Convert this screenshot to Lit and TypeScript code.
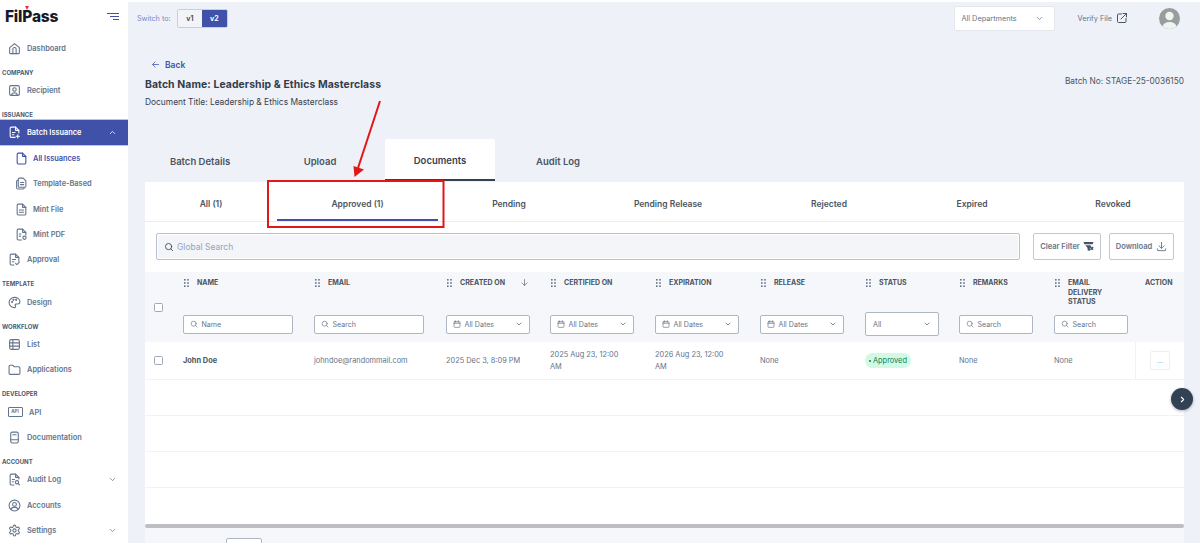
import { LitElement, css, html, svg } from 'lit';
import { customElement } from 'lit/decorators.js';

const doc = 'M14 2H6a2 2 0 0 0-2 2v16a2 2 0 0 0 2 2h12a2 2 0 0 0 2-2V8z';
const fold = 'M14 2v6h6';

const icons: Record<string, unknown> = {
  home: svg`<path d="M3 10.5 12 3l9 7.5V20a1.5 1.5 0 0 1-1.5 1.5h-15A1.5 1.5 0 0 1 3 20z"/><path d="M9 21.5V13a3 3 0 0 1 6 0v8.5"/>`,
  recipient: svg`<rect x="3" y="3" width="18" height="18" rx="2.5"/><circle cx="12" cy="10" r="3.2"/><path d="M6.5 21c.5-3.500 2.800-5 5.500-5s5 1.500 5.500 5"/>`,
  batch: svg`<path d="M13 21H6a2 2 0 0 1-2-2V4a2 2 0 0 1 2-2h8l6 6v5"/><path d="M14 2v6h6M8 12h5M8 16h3M18 16v6M15 19h6"/>`,
  file: svg`<path d="${doc}"/><path d="${fold}"/>`,
  template: svg`<path d="M8 2h7l5 5v10a2 2 0 0 1-2 2H8a2 2 0 0 1-2-2V4a2 2 0 0 1 2-2z"/><path d="M6 6H5a2 2 0 0 0-2 2v12a2 2 0 0 0 2 2h10a2 2 0 0 0 2-2M10 10h6M10 14h6"/>`,
  mint: svg`<path d="${doc}"/><path d="${fold}M8 13h8M8 17h8"/>`,
  pdf: svg`<path d="M12 22H6a2 2 0 0 1-2-2V4a2 2 0 0 1 2-2h8l6 6v5"/><path d="${fold}M8 11h3M8 15h2"/><circle cx="17.500" cy="18" r="3"/>`,
  approval: svg`<path d="M11 22H6a2 2 0 0 1-2-2V4a2 2 0 0 1 2-2h8l6 6v7"/><path d="${fold}M8 12h6M8 16h3M14 19l2.500 2.500L21 17"/>`,
  design: svg`<path d="M12 2.500C6.500 2.500 2 6.800 2 12s4.500 9.500 10 9.500c1.500 0 2.200-1 2.200-2 0-1.500-1-1.800-1-3 0-1.100.9-1.800 2-1.800h2.800c2.300 0 4-1.700 4-4C22 6 17.500 2.500 12 2.500z"/><circle cx="7.500" cy="11" r="1"/><circle cx="10" cy="7" r="1"/><circle cx="15" cy="7" r="1"/>`,
  list: svg`<rect x="3" y="3" width="18" height="18" rx="3"/><path d="M3 9h18M3 15h18M9 3v18"/>`,
  folder: svg`<path d="M2 6a2 2 0 0 1 2-2h5l2.500 3H20a2 2 0 0 1 2 2v10a2 2 0 0 1-2 2H4a2 2 0 0 1-2-2z"/>`,
  book: svg`<path d="M5 5a3 3 0 0 1 3-3h8a3 3 0 0 1 3 3v14a3 3 0 0 1-3 3H8a3 3 0 0 1-3-3z"/><path d="M5 16h14M9 7h6"/>`,
  audit: svg`<path d="M11 22H6a2 2 0 0 1-2-2V4a2 2 0 0 1 2-2h8l6 6v3"/><path d="${fold}M8 12h4M8 16h2"/><circle cx="16.500" cy="17" r="3"/><path d="m19 19.500 2.500 2.500"/>`,
  accounts: svg`<circle cx="12" cy="12" r="10"/><circle cx="12" cy="10" r="3.500"/><path d="M5.500 19.500c1-3 3.500-4.500 6.500-4.500s5.500 1.500 6.500 4.500"/>`,
  settings: svg`<path d="M12.220 2h-.44a2 2 0 0 0-2 2v.18a2 2 0 0 1-1 1.730l-.43.25a2 2 0 0 1-2 0l-.15-.08a2 2 0 0 0-2.730.73l-.22.38a2 2 0 0 0 .73 2.730l.15.1a2 2 0 0 1 1 1.720v.51a2 2 0 0 1-1 1.740l-.15.09a2 2 0 0 0-.73 2.730l.22.38a2 2 0 0 0 2.730.73l.15-.08a2 2 0 0 1 2 0l.43.25a2 2 0 0 1 1 1.730V20a2 2 0 0 0 2 2h.44a2 2 0 0 0 2-2v-.18a2 2 0 0 1 1-1.730l.43-.25a2 2 0 0 1 2 0l.15.08a2 2 0 0 0 2.730-.73l.22-.39a2 2 0 0 0-.73-2.730l-.15-.08a2 2 0 0 1-1-1.740v-.5a2 2 0 0 1 1-1.740l.15-.09a2 2 0 0 0 .73-2.730l-.22-.38a2 2 0 0 0-2.730-.73l-.15.08a2 2 0 0 1-2 0l-.43-.25a2 2 0 0 1-1-1.730V4a2 2 0 0 0-2-2z"/><circle cx="12" cy="12" r="3"/>`,
  down: svg`<path d="m6 9 6 6 6-6"/>`,
  up: svg`<path d="m6 15 6-6 6 6"/>`,
  right: svg`<path d="m9 6 6 6-6 6"/>`,
  back: svg`<path d="M20 12H5M11 5l-7 7 7 7"/>`,
  arrowDown: svg`<path d="M12 4v16M5 13l7 7 7-7"/>`,
  search: svg`<circle cx="11" cy="11" r="7.500"/><path d="m21 21-4.500-4.500"/>`,
  calendar: svg`<rect x="3" y="5" width="18" height="17" rx="2"/><path d="M3 10h18M8 2v5M16 2v5"/>`,
  external: svg`<path d="M11 4H5a2 2 0 0 0-2 2v13a2 2 0 0 0 2 2h13a2 2 0 0 0 2-2v-6"/><path d="M14 3h7v7M21 3 10 14"/>`,
  download: svg`<path d="M12 3v13M6.500 10.500 12 16l5.500-5.500M3 17v3a1 1 0 0 0 1 1h16a1 1 0 0 0 1-1v-3"/>`,
};

function ic(name: string, cls = '') {
  return html`<svg class="ic ${cls}" viewBox="0 0 24 24" fill="none" stroke="currentColor" stroke-width="2" stroke-linecap="round" stroke-linejoin="round">${icons[name]}</svg>`;
}

const grip = html`<svg class="grip" viewBox="0 0 5 8" fill="currentColor"><rect x="0" y="0" width="1.600" height="1.600"/><rect x="3.200" y="0" width="1.600" height="1.600"/><rect x="0" y="3.200" width="1.600" height="1.600"/><rect x="3.200" y="3.200" width="1.600" height="1.600"/><rect x="0" y="6.400" width="1.600" height="1.600"/><rect x="3.200" y="6.400" width="1.600" height="1.600"/></svg>`;

type NavItem = { label: string; icon?: string; sub?: boolean; active?: boolean; current?: boolean; caret?: string };
type NavGroup = { title?: string; items: NavItem[] };

const nav: NavGroup[] = [
  { items: [{ label: 'Dashboard', icon: 'home' }] },
  { title: 'COMPANY', items: [{ label: 'Recipient', icon: 'recipient' }] },
  {
    title: 'ISSUANCE',
    items: [
      { label: 'Batch Issuance', icon: 'batch', active: true, caret: 'up' },
      { label: 'All Issuances', icon: 'file', sub: true, current: true },
      { label: 'Template-Based', icon: 'template', sub: true },
      { label: 'Mint File', icon: 'mint', sub: true },
      { label: 'Mint PDF', icon: 'pdf', sub: true },
      { label: 'Approval', icon: 'approval' },
    ],
  },
  { title: 'TEMPLATE', items: [{ label: 'Design', icon: 'design' }] },
  { title: 'WORKFLOW', items: [{ label: 'List', icon: 'list' }, { label: 'Applications', icon: 'folder' }] },
  { title: 'DEVELOPER', items: [{ label: 'API', icon: 'api' }, { label: 'Documentation', icon: 'book' }] },
  {
    title: 'ACCOUNT',
    items: [
      { label: 'Audit Log', icon: 'audit', caret: 'down' },
      { label: 'Accounts', icon: 'accounts' },
      { label: 'Settings', icon: 'settings', caret: 'down' },
    ],
  },
];

const statusTabs = ['All (1)', 'Approved (1)', 'Pending', 'Pending Release', 'Rejected', 'Expired', 'Revoked'];

@customElement('app-root')
export class AppRoot extends LitElement {
  static styles = css`
    :host {
      display: block;
      position: relative;
      width: 1200px;
      height: 543px;
      overflow: hidden;
      background: #fff;
      font-family: Inter, 'Liberation Sans', sans-serif;
      font-size: 8.5px;
      color: #475569;
    }
    .ic { width: 12px; height: 12px; flex: none; display: block; }
    .grip { width: 5px; height: 8px; flex: none; color: #64748b; }
    .shell { display: flex; height: 100%; }

    /* sidebar */
    .side { width: 128px; flex: none; background: #fff; display: flex; flex-direction: column; }
    .brand { height: 35.500px; flex: none; display: flex; align-items: center; justify-content: space-between; padding: 0 9px 3px 5px; box-sizing: border-box; }
    .logo { position: relative; font-size: 15.5px; font-weight: 800; color: #16192c; letter-spacing: -0.2px; line-height: 1; }
    .logo i { position: absolute; left: 20px; top: -3px; width: 0; height: 0; border-left: 2.500px solid transparent; border-right: 2.500px solid transparent; border-top: 4px solid #e5343f; }
    .burger { width: 12px; display: flex; flex-direction: column; align-items: flex-end; gap: 1.500px; }
    .burger span { display: block; height: 1.500px; background: #3f51a8; }
    .burger span:nth-child(1) { width: 12px; }
    .burger span:nth-child(2) { width: 9px; }
    .burger span:nth-child(3) { width: 6px; }
    .group-title { height: 11px; flex: none; margin-top: 5.800px; padding-left: 2px; font-size: 6px; font-weight: 700; line-height: 11px; color: #4b5a70; }
    .item { height: 25.450px; flex: none; display: flex; align-items: center; padding-left: 7.500px; padding-right: 11px; gap: 6.500px; font-size: 7.400px; font-weight: 600; color: #64748b; }
    .item > .ic:first-child { width: 13px; height: 13px; }
    .item.sub { padding-left: 14.500px; gap: 5.500px; }
    .item.active { background: #3f51a8; color: #fff; box-shadow: 0 0 0 0.500px #7b88c6; }
    .item.current { color: #3f51a8; }
    .item .caret { margin-left: auto; width: 9px; height: 9px; }
    .api-ic { width: 13px; height: 8px; margin-right: 0; border: 0.800px solid currentColor; border-radius: 1px; font-size: 4.500px; line-height: 8px; text-align: center; font-weight: 700; flex: none; }

    /* main */
    .main { flex: 1; min-width: 0; margin-top: 2px; background: #eef1f7; display: flex; flex-direction: column; }
    .topbar { height: 32px; flex: none; display: flex; align-items: center; padding: 0 20px 0 9px; }
    .switch-label { color: #7a86c4; font-size: 7.200px; margin-right: 6px; }
    .switch { display: flex; height: 19px; width: 51px; border-radius: 2px; border: 1px solid #c9ced8; overflow: hidden; box-sizing: border-box; font-size: 7px; font-weight: 700; }
    .switch span { flex: 1; display: flex; align-items: center; justify-content: center; background: #f3f4f7; color: #475569; }
    .switch span.on { background: #3f51a8; color: #fff; }
    .dept { margin-left: auto; width: 101px; height: 25px; box-sizing: border-box; background: #fff; border: 1px solid #e3e6ec; border-radius: 2px; padding: 0 10px 0 7px; display: flex; align-items: center; justify-content: space-between; font-size: 7.300px; color: #64748b; }
    .dept .ic { width: 9px; height: 9px; }
    .verify { margin-left: 23px; display: flex; align-items: center; gap: 4px; font-size: 7.300px; color: #64748b; }
    .verify .ic { width: 12px; height: 12px; color: #475569; }
    .avatar { margin-left: 31px; width: 21px; height: 21px; border-radius: 50%; overflow: hidden; }
    .avatar svg { display: block; width: 100%; height: 100%; }

    .content { flex: 1; min-height: 0; padding: 24px 16px 0 17px; display: flex; flex-direction: column; }
    .head { display: flex; justify-content: space-between; align-items: flex-start; height: 50px; flex: none; }
    .back { display: flex; align-items: center; gap: 5px; padding: 1px 0 0 6px; height: 12px; box-sizing: border-box; color: #3f51a8; font-weight: 600; }
    .back .ic { width: 9px; height: 9px; }
    .name { margin-top: 7px; font-size: 10.400px; font-weight: 700; line-height: 16px; color: #333d4b; letter-spacing: 0.100px; }
    .title { margin-top: 3px; line-height: 12px; color: #374151; font-size: 8.400px; }
    .batch-no { padding-top: 17px; line-height: 12px; font-size: 8.300px; color: #4b5563; }

    .tabs { margin-top: 31px; display: flex; gap: 10px; height: 42px; flex: none; }
    .tab { width: 110px; box-sizing: border-box; padding-top: 2px; display: flex; align-items: center; justify-content: center; font-size: 9.500px; font-weight: 600; color: #4b5563; border-radius: 2px 2px 0 0; }
    .tab:last-child { width: 106px; }
    .tab.on { background: #fff; color: #374151; border-bottom: 2px solid #334155; }

    .card { margin-top: 1px; flex: 1; min-height: 0; background: #f5f7fa; display: flex; flex-direction: column; position: relative; }
    .status-tabs { display: grid; grid-template-columns: 132px 161px 142px 176px 146px 140px 142px; height: 40px; flex: none; background: #fff; border-bottom: 1px solid #e9ecf1; box-sizing: border-box; }
    .status-tab { display: flex; align-items: center; justify-content: center; padding-top: 5px; font-weight: 600; color: #4b5563; position: relative; }
    .status-tab.on::after { content: ''; position: absolute; left: 0; right: 0; bottom: 0; height: 2px; background: #3f51a8; }

    .tools { background: #fff; padding: 11px 10px 12px 11px; display: flex; gap: 8px; flex: none; }
    .global { flex: 1; height: 27px; box-sizing: border-box; margin-right: 5px; border: 1px solid #b9c0ca; border-radius: 2px; background: #f3f5f9; box-shadow: inset 0 0 0 1px #fff; display: flex; align-items: center; gap: 3px; padding-left: 7px; color: #94a3b8; font-size: 8.500px; }
    .global .ic { width: 10px; height: 10px; color: #374151; }
    .tool { height: 27px; box-sizing: border-box; border: 1px solid #c3c9d2; border-radius: 2px; background: #fff; display: flex; align-items: center; justify-content: center; gap: 3px; font-size: 7.500px; font-weight: 600; color: #64748b; }
    .tool.clear { width: 68px; }
    .tool.dl { width: 65px; gap: 4px; }
    .tool .ic { width: 11px; height: 11px; }

    .grid { display: grid; grid-template-columns: 38px 131px 132px 104px 105px 105px 105px 94px 95px 81px 49px; }
    .thead { height: 70px; background: #f5f7fa; flex: none; }
    .th { display: flex; flex-direction: column; padding: 6px 0 6px; box-sizing: border-box; min-width: 0; }
    .th-top { display: flex; gap: 8px; align-items: flex-start; padding-left: 1px; font-size: 7px; font-weight: 700; color: #4b5563; line-height: 9.600px; }
    .th-top span { max-width: 60px; }
    .th.narrow .th-top span { max-width: 36px; }
    .th-top .grip { margin-top: 1px; }
    .th-top .sort { width: 9px; height: 9px; margin-left: 7px; color: #64748b; flex: none; }
    .th-check { display: flex; align-items: center; padding: 0 0 0 9px; }
    .check { width: 9px; height: 9px; border: 1px solid #a0a8b4; border-radius: 1.500px; background: #fff; box-sizing: border-box; }
    .filter-wrap { margin-top: auto; height: 24px; display: flex; align-items: center; flex: none; }
    .filter { height: 19px; box-sizing: border-box; border: 1px solid #aeb6c2; border-radius: 2px; background: #fff; display: flex; align-items: center; gap: 3.500px; padding: 0 6px; font-size: 7.100px; color: #64748b; }
    .filter .ic { width: 8px; height: 8px; }
    .filter .ic:last-child:not(:first-child) { margin-left: auto; color: #475569; }
    .w-name { width: 110px; }
    .w-date { width: 84px; }
    .w-small { width: 74px; }
    .filter.status { height: 24px; padding: 0 7px; }
    .th.action { padding-left: 10px; }
    .th.action span { font-size: 7px; font-weight: 700; color: #4b5563; line-height: 9.600px; }

    .tbody { background: #fff; flex: none; }
    .row { height: 36px; box-sizing: border-box; border-bottom: 1px solid #f0f2f5; }
    .row.first { height: 38px; }
    .td { display: flex; align-items: center; min-width: 0; padding-right: 14px; font-size: 7.400px; line-height: 11.500px; color: #64748b; }
    .td.wrap { padding-right: 28px; }
    .td.check-cell { padding-left: 9px; padding-right: 0; }
    .td.strong { font-weight: 700; color: #4b5563; }
    .pill { height: 15px; padding: 0 4px 0 4px; border-radius: 8px; background: #d1fae5; color: #0f7a55; display: flex; align-items: center; gap: 2px; font-size: 7.400px; }
    .pill i { width: 2px; height: 2px; border-radius: 50%; background: #0f7a55; }
    .td.act { border-left: 1px solid #f0f2f5; justify-content: center; padding-right: 0; }
    .more { width: 20px; height: 19px; box-sizing: border-box; border: 1px solid #eceef2; border-radius: 2px; display: flex; align-items: center; justify-content: center; color: #94a3b8; font-size: 7px; line-height: 1; }
    .rest { background: #fff; flex: none; height: 36px; }
    .scroll { height: 4px; flex: none; background: #bcbec2; border-radius: 2px; }
    .foot { flex: 1; padding: 10px 0 0 81px; }
    .pager { width: 36px; height: 20px; box-sizing: border-box; background: #fff; border: 1px solid #aeb6c2; border-radius: 2px; }

    /* floating bits */
    .next { position: absolute; left: 1171px; top: 388px; width: 22px; height: 22px; border-radius: 50%; background: #334155; color: #fff; display: flex; align-items: center; justify-content: center; box-shadow: 0 1px 3px rgba(15, 23, 42, 0.350); }
    .next .ic { width: 9px; height: 9px; stroke-width: 3; }
    .annot { position: absolute; inset: 0; width: 1200px; height: 543px; pointer-events: none; }
  `;

  private navItem(it: NavItem) {
    const cls = `item ${it.sub ? 'sub' : ''} ${it.active ? 'active' : ''} ${it.current ? 'current' : ''}`;
    return html`<div class=${cls}>
      ${it.icon === 'api' ? html`<span class="api-ic">API</span>` : ic(it.icon ?? 'file')}
      <span>${it.label}</span>
      ${it.caret ? ic(it.caret, 'caret') : ''}
    </div>`;
  }

  private th(label: string, filter: unknown, sort = false, narrow = false) {
    return html`<div class="th ${narrow ? 'narrow' : ''}">
      <div class="th-top">${grip}<span>${label}</span>${sort ? ic('arrowDown', 'sort') : ''}</div>
      <div class="filter-wrap">${filter}</div>
    </div>`;
  }

  private searchFilter(text: string, width: string) {
    return html`<div class="filter ${width}">${ic('search')}<span>${text}</span></div>`;
  }

  private dateFilter() {
    return html`<div class="filter w-date">${ic('calendar')}<span>All Dates</span>${ic('down')}</div>`;
  }

  render() {
    return html`
      <div class="shell">
        <aside class="side">
          <div class="brand">
            <div class="logo">FilPass<i></i></div>
            <div class="burger"><span></span><span></span><span></span></div>
          </div>
          ${nav.map(
            (g) => html`
              ${g.title ? html`<div class="group-title">${g.title}</div>` : ''}
              ${g.items.map((it) => this.navItem(it))}
            `
          )}
        </aside>

        <div class="main">
          <header class="topbar">
            <span class="switch-label">Switch to:</span>
            <div class="switch"><span>v1</span><span class="on">v2</span></div>
            <div class="dept"><span>All Departments</span>${ic('down')}</div>
            <div class="verify"><span>Verify File</span>${ic('external')}</div>
            <div class="avatar">
              <svg viewBox="0 0 21 21"><rect width="21" height="21" fill="#9a9d9e"/><circle cx="10.500" cy="8" r="4.200" fill="#eef4ee"/><ellipse cx="10.500" cy="19" rx="7" ry="5" fill="#eef4ee"/></svg>
            </div>
          </header>

          <section class="content">
            <div class="head">
              <div>
                <div class="back">${ic('back')}<span>Back</span></div>
                <div class="name">Batch Name: Leadership &amp; Ethics Masterclass</div>
                <div class="title">Document Title: Leadership &amp; Ethics Masterclass</div>
              </div>
              <div class="batch-no">Batch No: STAGE-25-0036150</div>
            </div>

            <div class="tabs">
              <div class="tab">Batch Details</div>
              <div class="tab">Upload</div>
              <div class="tab on">Documents</div>
              <div class="tab">Audit Log</div>
            </div>

            <div class="card">
              <div class="status-tabs">
                ${statusTabs.map((t, i) => html`<div class="status-tab ${i === 1 ? 'on' : ''}">${t}</div>`)}
              </div>

              <div class="tools">
                <div class="global">${ic('search')}<span>Global Search</span></div>
                <div class="tool clear">
                  <span>Clear Filter</span>
                  <svg class="ic" viewBox="0 0 24 24" fill="#475569"><path d="M1 2h22l-2 5H3zM5 9h11l2 3-3 3v7l-5-2v-5z"/><path d="m16 13 6 6m0-6-6 6" stroke="#475569" stroke-width="3"/></svg>
                </div>
                <div class="tool dl"><span>Download</span>${ic('download')}</div>
              </div>

              <div class="grid thead">
                <div class="th-check"><div class="check"></div></div>
                ${this.th('NAME', this.searchFilter('Name', 'w-name'))}
                ${this.th('EMAIL', this.searchFilter('Search', 'w-name'))}
                ${this.th('CREATED ON', this.dateFilter(), true)}
                ${this.th('CERTIFIED ON', this.dateFilter())}
                ${this.th('EXPIRATION', this.dateFilter())}
                ${this.th('RELEASE', this.dateFilter())}
                ${this.th('STATUS', html`<div class="filter status w-small"><span>All</span>${ic('down')}</div>`)}
                ${this.th('REMARKS', this.searchFilter('Search', 'w-small'))}
                ${this.th('EMAIL DELIVERY STATUS', this.searchFilter('Search', 'w-small'), false, true)}
                <div class="th action"><span>ACTION</span></div>
              </div>

              <div class="tbody">
                <div class="grid row first">
                  <div class="td check-cell"><div class="check"></div></div>
                  <div class="td strong">John Doe</div>
                  <div class="td">johndoe@randommail.com</div>
                  <div class="td">2025 Dec 3, 8:09 PM</div>
                  <div class="td wrap">2025 Aug 23, 12:00 AM</div>
                  <div class="td wrap">2026 Aug 23, 12:00 AM</div>
                  <div class="td">None</div>
                  <div class="td"><span class="pill"><i></i>Approved</span></div>
                  <div class="td">None</div>
                  <div class="td">None</div>
                  <div class="td act"><div class="more">...</div></div>
                </div>
                <div class="row"></div>
                <div class="row"></div>
                <div class="row"></div>
              </div>
              <div class="rest"></div>
              <div class="scroll"></div>
              <div class="foot"><div class="pager"></div></div>
            </div>
          </section>
        </div>
      </div>

      <div class="next">${ic('right')}</div>

      <svg class="annot" viewBox="0 0 1200 543">
        <rect x="268" y="181" width="175.500" height="46" fill="none" stroke="#e21717" stroke-width="2"/>
        <line x1="380" y1="101" x2="358" y2="168" stroke="#e21717" stroke-width="2"/>
        <polygon points="354.500,177 353.500,166 364,169.500" fill="#e21717"/>
      </svg>
    `;
  }
}
